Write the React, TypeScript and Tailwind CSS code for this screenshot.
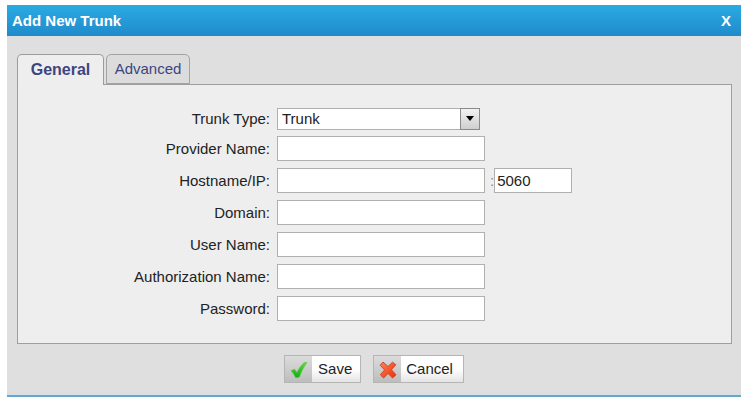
import { useState } from 'react';

const fields = [
    { id: 'provider', label: 'Provider Name:', type: 'text' },
    { id: 'host', label: 'Hostname/IP:', type: 'text' },
    { id: 'domain', label: 'Domain:', type: 'text' },
    { id: 'user', label: 'User Name:', type: 'text' },
    { id: 'auth', label: 'Authorization Name:', type: 'text' },
    { id: 'password', label: 'Password:', type: 'password' },
];

const labelClass = 'w-[252px] shrink-0 text-right';
const inputClass = 'h-[25px] border border-[#b0b0b0] bg-white px-0.5 outline-none';
const buttonClass =
    'flex h-7 items-stretch border border-[#b5b5b5] bg-linear-to-b from-white from-50% to-[#e4e4e4]';
const iconClass = 'flex w-[27px] items-end justify-center bg-linear-to-b from-[#dcdcdc] to-[#bdbdbd] pb-[3px]';

const CheckIcon = () => (
    <svg viewBox="0 0 18 18" className="h-[18px] w-[18px]" aria-hidden="true">
        <defs>
            <linearGradient id="check" x1="0" y1="0" x2="0" y2="1">
                <stop offset="0" stopColor="#5fd83c" />
                <stop offset="1" stopColor="#10ad10" />
            </linearGradient>
        </defs>
        <path
            d="M1 9.800 4.600 8.200 7 11.400C8.800 7.400 11.400 4 14.200 1.700L17 1.500C13.500 6 11.200 11 9.400 16L5.700 16.800C4.400 14 3 11.700 1 9.800Z"
            fill="url(#check)"
            stroke="#4fc63a"
            strokeWidth=".6"
        />
    </svg>
);

const CrossIcon = () => (
    <svg viewBox="0 0 18 18" className="h-[18px] w-[18px]" aria-hidden="true">
        <defs>
            <linearGradient id="cross" x1="0" y1="0" x2="1" y2="1">
                <stop offset="0" stopColor="#f58a55" />
                <stop offset=".5" stopColor="#f4582f" />
                <stop offset="1" stopColor="#ee2d0c" />
            </linearGradient>
        </defs>
        <path
            d="M4 1 9 5.500 13.500 1.200 16.800 3.800 12.400 8.700 17 13.800 13.600 17 9 12.400 4.600 17 1.300 13.800 5.600 9 1.200 4.200Z"
            fill="url(#cross)"
            stroke="#d3452a"
            strokeWidth="1"
            strokeLinejoin="round"
        />
    </svg>
);

export default function App() {
    const [tab, setTab] = useState('general');

    return (
        <div className="bg-white px-[7px] pt-[5px] pb-[5px] font-['Liberation_Sans',Arial,sans-serif] text-[15px] leading-5 text-[#222]">
            <form
                className="mr-px border-b-2 border-[#69a5cd] bg-[#dfdfdf]"
                role="dialog"
                aria-labelledby="title"
                onSubmit={(e) => e.preventDefault()}
            >
                {/* Title bar */}
                <div className="flex h-[31px] items-center justify-between bg-linear-to-b from-[#29abe2] to-[#218acb] pr-2.5 pl-[5px] font-bold text-white">
                    <h1 id="title">Add New Trunk</h1>
                    <button type="button" aria-label="Close">
                        X
                    </button>
                </div>

                <div className="pt-[18px] pr-[9px] pl-2.5">
                    {/* Tabs */}
                    <div role="tablist" className="flex items-start gap-0.5 text-[#3d4580]">
                        <button
                            type="button"
                            role="tab"
                            aria-selected={tab === 'general'}
                            onClick={() => setTab('general')}
                            className="relative -mb-px h-[31px] w-[87px] rounded-t-[5px] border border-b-0 border-[#9c9c9c] bg-[#eee] text-base leading-5 font-bold"
                        >
                            General
                        </button>
                        <button
                            type="button"
                            role="tab"
                            aria-selected={tab === 'advanced'}
                            onClick={() => setTab('advanced')}
                            className="h-[30px] w-[84px] rounded-t-[5px] border border-[#a3a3a3] bg-[#dcdcdc]"
                        >
                            Advanced
                        </button>
                    </div>

                    {/* Trunk settings */}
                    <div
                        role="tabpanel"
                        className="flex flex-col gap-[7px] border border-[#9f9f9f] bg-[#eee] pt-[23px] pb-[22px]"
                    >
                        <div className="flex h-[21px] items-center gap-[7px]">
                            <label htmlFor="type" className={labelClass}>
                                Trunk Type:
                            </label>
                            <div className="relative">
                                <select
                                    id="type"
                                    className="block h-[22px] w-[203px] appearance-none border border-[#b0b0b0] bg-white pl-1 outline-none"
                                >
                                    <option>Trunk</option>
                                </select>
                                <span className="pointer-events-none absolute top-0 right-0 flex h-[22px] w-5 items-center justify-center border border-[#8a8a8a] bg-linear-to-b from-[#f2f2f2] to-[#cfcfcf]">
                                    <svg viewBox="0 0 8 5" className="h-[5px] w-2" aria-hidden="true">
                                        <path d="M0 0H8L4 5Z" fill="#000" />
                                    </svg>
                                </span>
                            </div>
                        </div>

                        {fields.map((field) => (
                            <div key={field.id} className="flex items-center gap-[7px]">
                                <label htmlFor={field.id} className={labelClass}>
                                    {field.label}
                                </label>
                                {field.id === 'host' ? (
                                    <div className="flex items-center">
                                        <input id={field.id} type={field.type} className={`${inputClass} w-52`} />
                                        <label htmlFor="port" className="pl-[5px] text-[#888]">
                                            :
                                        </label>
                                        <input
                                            id="port"
                                            aria-label="Port"
                                            defaultValue="5060"
                                            className={`${inputClass} w-[78px]`}
                                        />
                                    </div>
                                ) : (
                                    <input id={field.id} type={field.type} className={`${inputClass} w-52`} />
                                )}
                            </div>
                        ))}
                    </div>
                </div>

                {/* Actions */}
                <div className="flex justify-center gap-3 border-b-2 border-[#d0e2ec] pt-[11px] pb-2.5">
                    <button type="submit" className={buttonClass}>
                        <span className={iconClass}>
                            <CheckIcon />
                        </span>
                        <span className="self-center pr-2 pl-1.5">Save</span>
                    </button>
                    <button type="button" className={buttonClass}>
                        <span className={iconClass}>
                            <CrossIcon />
                        </span>
                        <span className="self-center pr-2.5 pl-[5px]">Cancel</span>
                    </button>
                </div>
            </form>
        </div>
    );
}
